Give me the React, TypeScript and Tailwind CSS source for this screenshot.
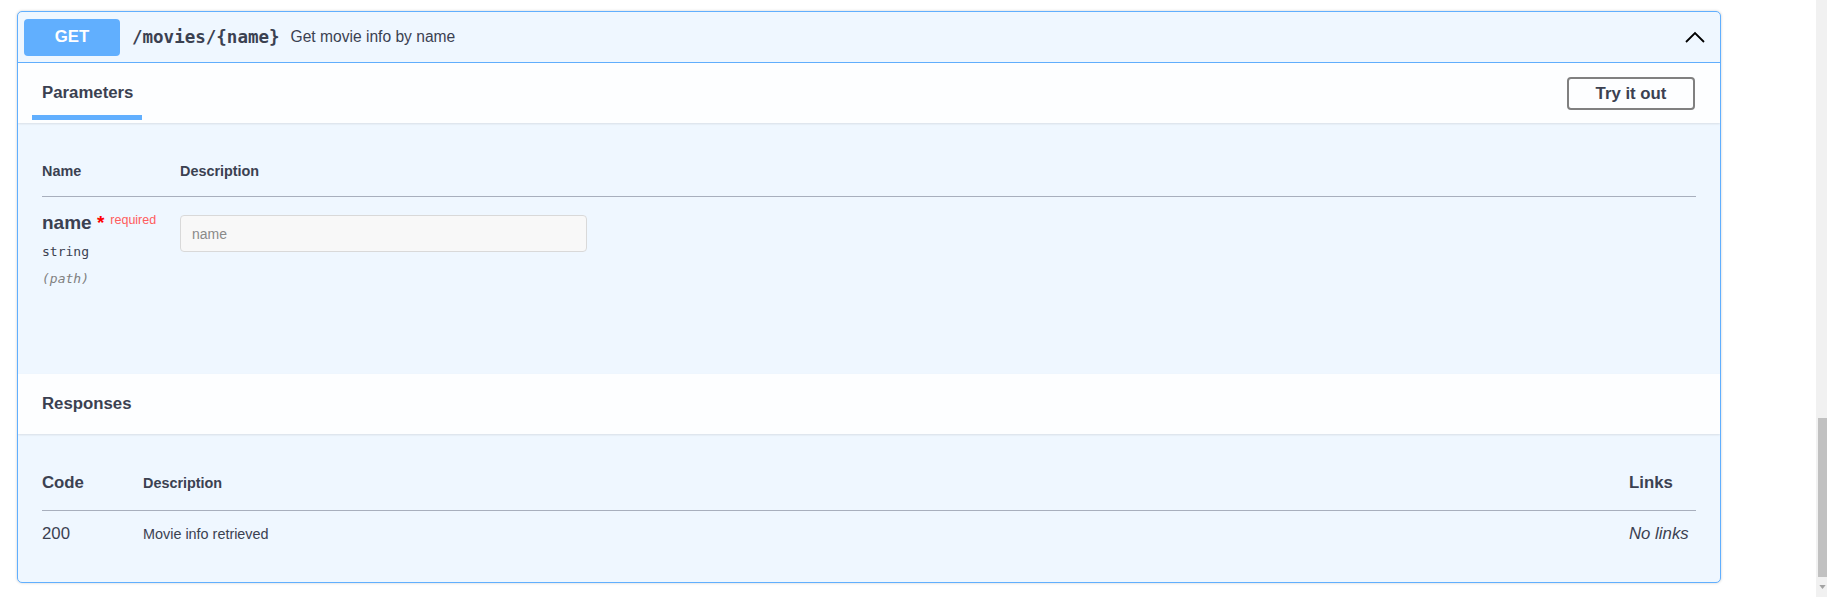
import React from 'react';

const ChevronUp: React.FC = () => (
  <svg viewBox="0 0 20 12" className="w-[20px] h-[12px]" fill="none">
    <polyline points="1,11 10,2 19,11" stroke="#000" strokeWidth="1.8" />
  </svg>
);

const OperationBlock: React.FC = () => {
  return (
    <div className="w-[1704px] rounded-[5px] border border-[#61affe] bg-[#eff7ff] shadow-[0_0_3px_rgba(0,0,0,0.19)] overflow-hidden">
      {/* summary */}
      <div className="flex h-[51px] items-center pl-[6px] pr-[15px] border-b border-[#61affe]">
        <div className="flex h-[37px] w-[96px] items-center justify-center rounded-[4px] bg-[#61affe] text-[16.8px] font-bold text-white">
          GET
        </div>
        <span className="ml-[12px] font-['DejaVu_Sans_Mono',monospace] text-[17.5px] font-bold text-[#3b4151]">
          /movies/{'{'}name{'}'}
        </span>
        <span className="ml-[11px] text-[15.6px] text-[#3b4151]">Get movie info by name</span>
        <div className="flex-1" />
        <ChevronUp />
      </div>

      {/* parameters header */}
      <div className="flex h-[60px] justify-between pl-[14px] pr-[25px] bg-[#fdfeff] shadow-[0_1px_2px_rgba(0,0,0,0.1)] relative">
        <div className="flex flex-col pt-[20px]">
          <span className="px-[10px] text-[16.8px] leading-[20px] font-bold text-[#3b4151]">Parameters</span>
          <div className="mt-[12px] h-[5px] w-[110px] bg-[#61affe]" />
        </div>
        <button className="self-center mt-[1px] flex h-[33px] w-[128px] items-center justify-center rounded-[4px] border-2 border-[#808080] text-[16.8px] font-bold text-[#3b4151]">
          Try it out
        </button>
      </div>

      {/* parameters body */}
      <div className="h-[251px] px-[24px]">
        <div className="flex pt-[39px] pb-[16px] border-b border-[#a8afbd] text-[14.4px] leading-[18px] font-bold text-[#3b4151]">
          <div className="w-[138px]">Name</div>
          <div>Description</div>
        </div>
        <div className="flex">
          <div className="w-[138px] pt-[15px]">
            <div className="flex items-start text-[#3b4151]">
              <span className="text-[19px] leading-[22px] font-bold">
                name<span className="text-[#ff0000]">&nbsp;*</span>
              </span>
              <span className="pl-[6px] pt-[1px] text-[12.5px] leading-[14px] text-[#ff5c5c]">required</span>
            </div>
            <div className="mt-[10px] font-['DejaVu_Sans_Mono',monospace] text-[13px] leading-[16px] font-normal text-[#3b4151]">
              string
            </div>
            <div className="mt-[11px] font-['DejaVu_Sans_Mono',monospace] text-[13px] leading-[16px] italic font-medium text-[#808080]">
              (path)
            </div>
          </div>
          <div className="pt-[18px]">
            <input
              type="text"
              placeholder="name"
              className="h-[37px] w-[407px] rounded-[4px] border border-[#d9d9d9] bg-[#f8f8f8] px-[11px] text-[14px] outline-none placeholder:text-[#8a8a8a]"
            />
          </div>
        </div>
      </div>

      {/* responses header */}
      <div className="flex h-[60px] items-center px-[24px] bg-[#fdfeff] shadow-[0_1px_2px_rgba(0,0,0,0.1)] relative">
        <span className="text-[16.8px] font-bold text-[#3b4151]">Responses</span>
      </div>

      {/* responses body */}
      <div className="h-[148px] px-[24px] text-[#3b4151]">
        <div className="flex items-baseline pt-[39px] pb-[17px] border-b border-[#a8afbd] font-bold">
          <div className="w-[101px] text-[16.8px] leading-[20px]">Code</div>
          <div className="flex-1 text-[14.4px] leading-[18px]">Description</div>
          <div className="w-[67px] text-[16.8px] leading-[20px]">Links</div>
        </div>
        <div className="flex items-start pt-[13px]">
          <div className="w-[101px] text-[16.8px] leading-[20px]">200</div>
          <div className="flex-1 pt-[1px] text-[14.4px] leading-[18px]">Movie info retrieved</div>
          <div className="w-[67px] text-[16.8px] leading-[20px] italic">No links</div>
        </div>
      </div>
    </div>
  );
};

export default function App() {
  return (
    <div className="flex h-[597px] w-full overflow-hidden bg-white font-['Liberation_Sans',Arial,sans-serif]">
      <div className="flex-1 pl-[17px] pt-[11px]">
        <OperationBlock />
      </div>
      {/* scrollbar */}
      <div className="flex w-[11px] flex-col bg-[#f1f1f1]">
        <div className="h-[418px]" />
        <div className="ml-[2px] h-[159px] bg-[#c1c1c1]" />
        <div className="flex flex-1 items-center justify-center pl-[2px]">
          <svg viewBox="0 0 8 5" className="w-[7px] h-[4px]">
            <polygon points="0,0 8,0 4,5" fill="#a3a3a3" />
          </svg>
        </div>
      </div>
    </div>
  );
}
